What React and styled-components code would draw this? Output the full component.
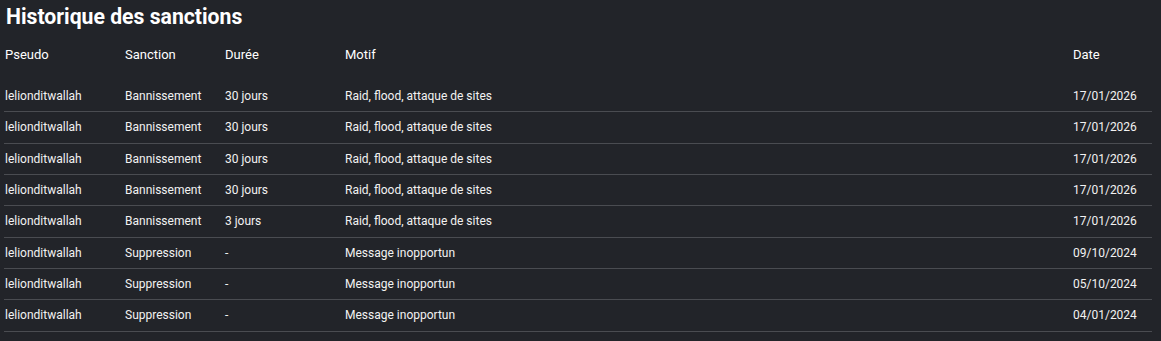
import styled, { createGlobalStyle } from "styled-components";

const GlobalStyle = createGlobalStyle`
  html, body {
    margin: 0;
    padding: 0;
    background: #222429;
  }
  body {
    font-family: Roboto, "Liberation Sans", sans-serif;
    color: #f2f2f2;
  }
`;

const Page = styled.div`
  width: 1161px;
  height: 341px;
  padding: 0 9px 0 4px;
  box-sizing: border-box;
  background: #222429;
  overflow: hidden;
`;

const Title = styled.h2`
  margin: 0;
  padding: 5px 0 0 2px;
  height: 33px;
  box-sizing: border-box;
  font-size: 21.2px;
  font-weight: 700;
  line-height: 24px;
  color: #ffffff;
`;

const Table = styled.table`
  width: 1148px;
  border-collapse: collapse;
  table-layout: fixed;
`;

const HeadCell = styled.th`
  width: ${(props) => props.$width || "auto"};
  padding: 14px 1px 18px;
  text-align: left;
  font-size: 13px;
  font-weight: 400;
  line-height: 16px;
  color: #ffffff;
`;

const Row = styled.tr`
  border-bottom: 1px solid #4a4c51;
`;

const Cell = styled.td`
  padding: 8px 1px;
  height: 14.33px;
  font-size: 12px;
  line-height: 14.33px;
  color: #f2f2f2;
  white-space: nowrap;
`;

const columns = [
  { label: "Pseudo", width: "118px" },
  { label: "Sanction", width: "98px" },
  { label: "Durée", width: "118px" },
  { label: "Motif" },
  { label: "Date", width: "78px" },
];

const sanctions = [
  ["lelionditwallah", "Bannissement", "30 jours", "Raid, flood, attaque de sites", "17/01/2026"],
  ["lelionditwallah", "Bannissement", "30 jours", "Raid, flood, attaque de sites", "17/01/2026"],
  ["lelionditwallah", "Bannissement", "30 jours", "Raid, flood, attaque de sites", "17/01/2026"],
  ["lelionditwallah", "Bannissement", "30 jours", "Raid, flood, attaque de sites", "17/01/2026"],
  ["lelionditwallah", "Bannissement", "3 jours", "Raid, flood, attaque de sites", "17/01/2026"],
  ["lelionditwallah", "Suppression", "-", "Message inopportun", "09/10/2024"],
  ["lelionditwallah", "Suppression", "-", "Message inopportun", "05/10/2024"],
  ["lelionditwallah", "Suppression", "-", "Message inopportun", "04/01/2024"],
];

export default function App() {
  return (
    <Page>
      <GlobalStyle />
      <Title>Historique des sanctions</Title>
      <Table>
        <thead>
          <tr>
            {columns.map((col) => (
              <HeadCell key={col.label} $width={col.width}>
                {col.label}
              </HeadCell>
            ))}
          </tr>
        </thead>
        <tbody>
          {sanctions.map((row, i) => (
            <Row key={i}>
              {row.map((value, j) => (
                <Cell key={j}>{value}</Cell>
              ))}
            </Row>
          ))}
        </tbody>
      </Table>
    </Page>
  );
}
